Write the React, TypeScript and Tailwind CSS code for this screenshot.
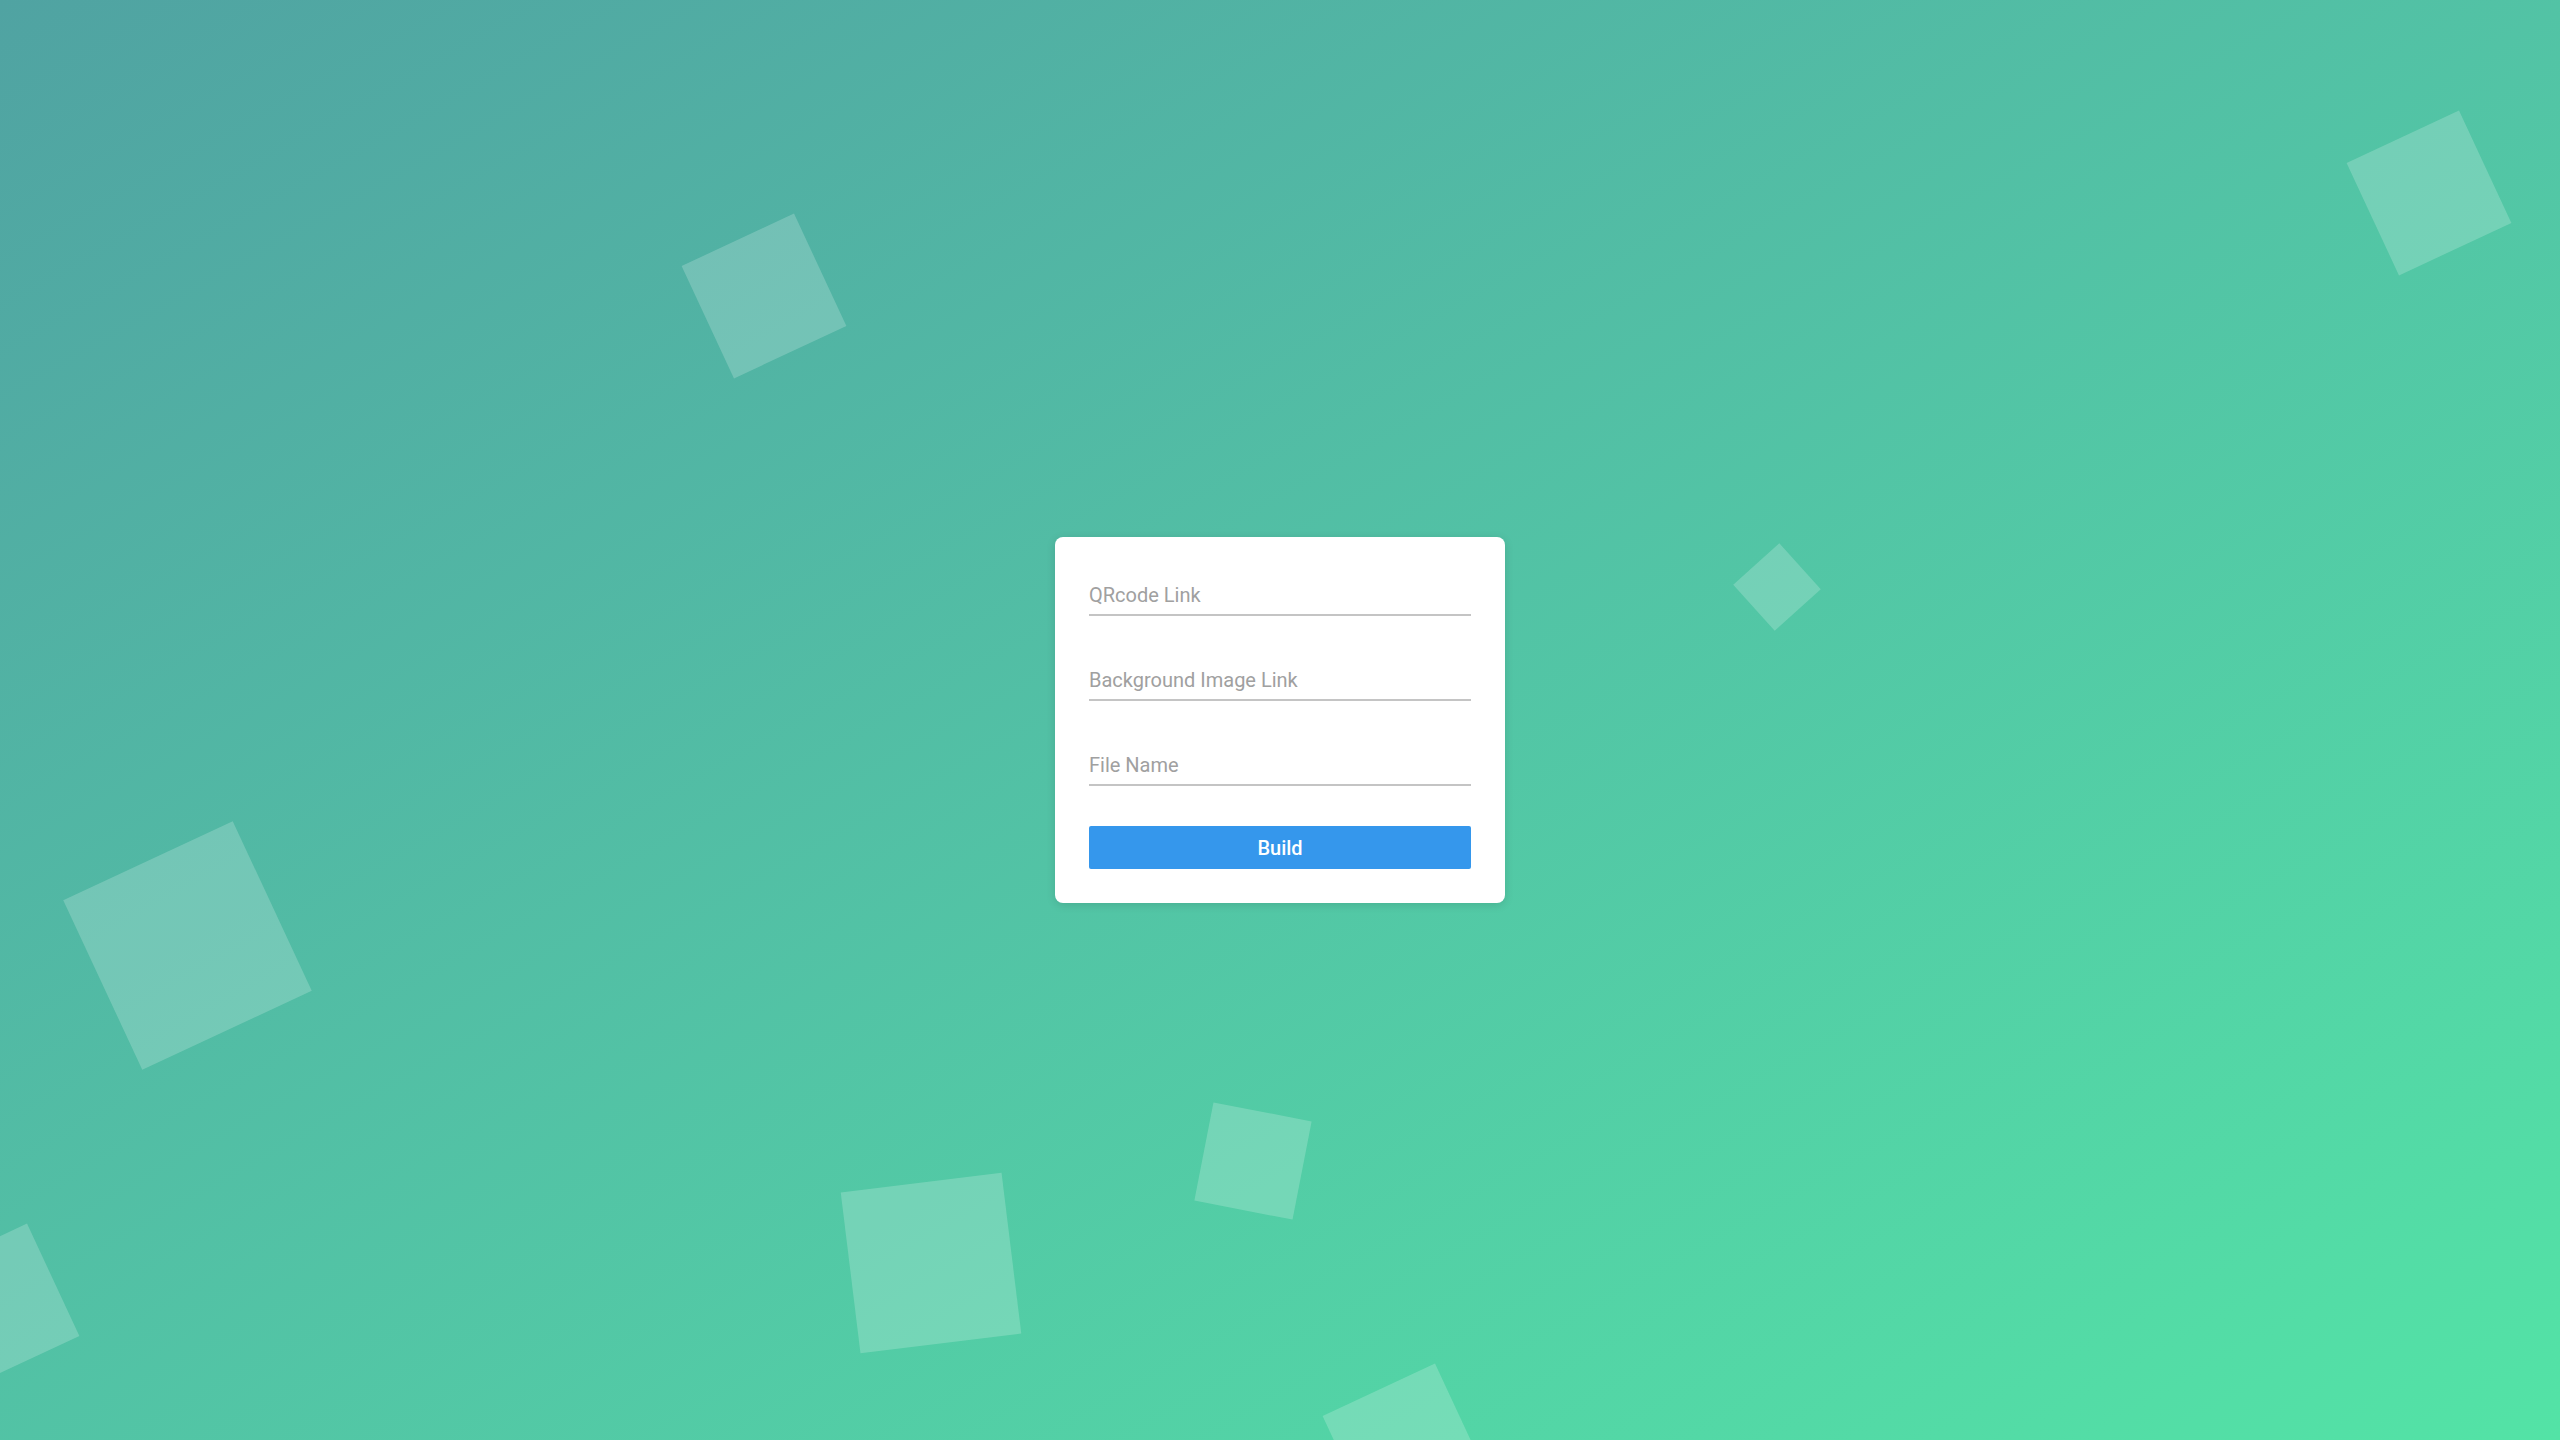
import React, { useState } from 'react';

/**
 * QR poster builder form over the floating squares background.
 */
const App: React.FC = () => {
  const [qrLink, setQrLink] = useState('');
  const [bgLink, setBgLink] = useState('');
  const [fileName, setFileName] = useState('');

  const inputClass =
    'block w-full h-[45px] mb-[40px] bg-transparent border-0 border-b-2 border-[#c4c4c4] px-0 pt-[5px] pb-0 text-[20px] text-[#555] placeholder:text-[#a0a0a0] outline-none focus:border-[#3597ec]';

  return (
    <div className="relative w-full h-screen overflow-hidden bg-linear-to-br from-[#50a3a2] to-[#53e3a6] font-['Roboto','Liberation_Sans',sans-serif]">
      {/* Floating squares */}
      <div className="absolute left-[702px] top-[234px] w-[124px] h-[124px] -rotate-[25deg] bg-white/20" />
      <div className="absolute left-[1746px] top-[556px] w-[62px] h-[62px] -rotate-[42deg] bg-white/20" />
      <div className="absolute left-[2367px] top-[131px] w-[124px] h-[124px] -rotate-[25deg] bg-white/20" />
      <div className="absolute left-[94px] top-[852px] w-[187px] h-[187px] -rotate-[25deg] bg-white/20" />
      <div className="absolute left-[-65px] top-[1244px] w-[124px] h-[124px] -rotate-[25deg] bg-white/20" />
      <div className="absolute left-[850px] top-[1182px] w-[162px] h-[162px] -rotate-[7deg] bg-white/20" />
      <div className="absolute left-[1203px] top-[1111px] w-[100px] h-[100px] rotate-[11deg] bg-white/20" />
      <div className="absolute left-[1343px] top-[1384px] w-[124px] h-[124px] -rotate-[25deg] bg-white/20" />

      {/* Form card */}
      <div className="relative flex h-full items-center justify-center">
        <form
          onSubmit={(e) => e.preventDefault()}
          className="w-[450px] rounded-[8px] bg-white p-[34px] shadow-[0_2px_10px_rgba(0,0,0,0.12)]"
        >
          <input
            type="text"
            value={qrLink}
            onChange={(e) => setQrLink(e.target.value)}
            placeholder="QRcode Link"
            className={inputClass}
          />
          <input
            type="text"
            value={bgLink}
            onChange={(e) => setBgLink(e.target.value)}
            placeholder="Background Image Link"
            className={inputClass}
          />
          <input
            type="text"
            value={fileName}
            onChange={(e) => setFileName(e.target.value)}
            placeholder="File Name"
            className={inputClass}
          />
          <button
            type="submit"
            className="block w-full h-[43px] rounded-[2px] bg-[#3597ec] text-[20px] font-medium text-white"
          >
            Build
          </button>
        </form>
      </div>
    </div>
  );
};

export default App;
